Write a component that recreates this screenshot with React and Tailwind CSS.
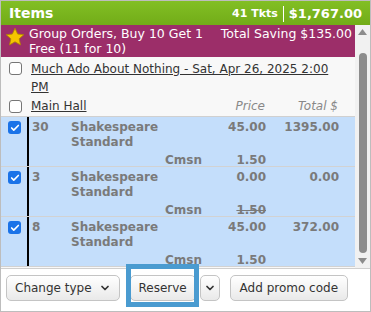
import { Check, ChevronDown } from 'lucide-react';

const rows = [
  { qty: '30', price: '45.00', total: '1395.00', cmsn: '1.50', struck: false },
  { qty: '3', price: '0.00', total: '0.00', cmsn: '1.50', struck: true },
  { qty: '8', price: '45.00', total: '372.00', cmsn: '1.50', struck: false },
];

const Box = ({ checked }) =>
  checked ? (
    <div className="w-[13px] h-[13px] rounded-[3px] bg-[#1a73e8] flex items-center justify-center">
      <Check className="w-[10px] h-[10px] text-white" strokeWidth={4} />
    </div>
  ) : (
    <div className="w-[13px] h-[13px] rounded-[3px] border border-[#767676] bg-white" />
  );

const Star = () => (
  <svg width="20" height="20" viewBox="0 0 24 24">
    <path
      d="M12 1.5l3.2 7 7.3.7-5.5 5 1.6 7.3L12 17.8 5.4 21.5 7 14.2l-5.5-5 7.3-.7z"
      fill="#f5c400"
      stroke="#b08600"
      strokeWidth="1"
    />
  </svg>
);

export default function App() {
  return (
    <div
      className="w-[371px] h-[312px] border border-[#bdbdbd] flex flex-col overflow-hidden bg-white text-[#333]"
      style={{ fontFamily: '"DejaVu Sans", Verdana, sans-serif' }}
    >
      {/* header */}
      <div className="h-[24px] shrink-0 bg-gradient-to-b from-[#82bf24] to-[#72ac18] flex items-center justify-between pl-[8px] pr-[8px] text-white font-bold">
        <span className="text-[14px]">Items</span>
        <div className="flex items-center pt-[2px]">
          <span className="text-[11px] pr-[5px] border-r border-white leading-[16px]">41 Tkts</span>
          <span className="text-[13px] pl-[5px]">$1,767.00</span>
        </div>
      </div>

      <div className="flex flex-1 min-h-0">
        <div className="flex-1 min-w-0 overflow-hidden bg-[#f8f8f8]">
          {/* promo banner */}
          <div className="bg-[#9c2e69] text-white text-[12.5px] leading-[15px] flex pl-[4px] pr-[3px] pt-[1px] h-[32px]">
            <div className="pt-[1px] pr-[4px]"><Star /></div>
            <div className="flex-1">Group Orders, Buy 10 Get 1 Free (11 for 10)</div>
            <div className="whitespace-nowrap">Total Saving $135.00</div>
          </div>

          <div className="flex items-start pl-[8px] pt-[3px] pr-[8px] text-[12px] leading-[18px]">
            <div className="pt-[2px] w-[22px] shrink-0"><Box /></div>
            <a className="underline">Much Ado About Nothing - Sat, Apr 26, 2025 2:00 PM</a>
          </div>

          <div className="flex items-center h-[21px] pl-[8px] text-[12px] border-b border-[#d0d0d0]">
            <div className="w-[22px] shrink-0"><Box /></div>
            <a className="underline flex-1">Main Hall</a>
            <span className="italic text-[#888] w-[60px] text-right">Price</span>
            <span className="italic text-[#888] w-[73px] text-right">Total $</span>
            <span className="w-[17px]" />
          </div>

          {rows.map((r, i) => (
            <div key={i} className="flex h-[50px] bg-[#c4defb] border-b border-[#d2d2d2] text-[12px] font-bold text-[#7a7a7a] leading-[15px]">
              <div className="w-[28px] shrink-0 pl-[7px] pt-[4px] border-r-2 border-black">
                <Box checked />
              </div>
              <div className="flex-1 pt-[3px]">
                <div className="flex">
                  <span className="w-[42px] pl-[3px]">{r.qty}</span>
                  <span className="w-[100px]">Shakespeare Standard</span>
                  <span className="w-[52px]" />
                  <span className="w-[43px] text-right">{r.price}</span>
                  <span className="w-[73px] text-right">{r.total}</span>
                </div>
                <div className="flex mt-[3px]">
                  <span className="w-[136px]" />
                  <span className="w-[58px]">Cmsn</span>
                  <span className={`w-[43px] text-right ${r.struck ? 'line-through' : ''}`}>{r.cmsn}</span>
                </div>
              </div>
            </div>
          ))}
        </div>

        {/* scrollbar */}
        <div className="w-[15px] shrink-0 bg-[#f1f1f1] flex flex-col items-center py-[4px]">
          <svg width="9" height="6" viewBox="0 0 9 6"><path d="M4.5 0L9 6H0z" fill="#8c8c8c" /></svg>
          <div className="w-[8px] flex-1 mt-[18px] mb-[5px] rounded-full bg-[#8c8c8c]" />
          <svg width="9" height="6" viewBox="0 0 9 6"><path d="M0 0h9L4.5 6z" fill="#8c8c8c" /></svg>
        </div>
      </div>

      {/* footer */}
      <div className="h-[43px] shrink-0 border-t border-[#cfcfcf] flex items-start pt-[6px] pl-[5px] gap-[10px] text-[12px] text-[#333]">
        <button className="h-[26px] px-[8px] rounded-[5px] border border-[#c4c4c4] bg-gradient-to-b from-white to-[#e9e9e9] flex items-center gap-[7px]">
          Change type <ChevronDown className="w-[12px] h-[12px]" strokeWidth={3.5} />
        </button>
        <div className="flex items-center">
          <div className="relative">
            <button className="h-[26px] w-[66px] rounded-[5px] border border-[#c4c4c4] bg-gradient-to-b from-white to-[#e9e9e9]">
              Reserve
            </button>
            <div className="absolute left-[-4px] right-[-3px] top-[-11px] bottom-[-6px] border-[5px] border-[#4a9bd0]" />
          </div>
          <button className="h-[26px] w-[20px] ml-[4px] rounded-[5px] border border-[#c4c4c4] bg-gradient-to-b from-white to-[#e9e9e9] flex items-center justify-center">
            <ChevronDown className="w-[12px] h-[12px]" strokeWidth={3.5} />
          </button>
        </div>
        <button className="h-[26px] px-[9px] rounded-[5px] border border-[#c4c4c4] bg-gradient-to-b from-white to-[#e9e9e9]">
          Add promo code
        </button>
      </div>
    </div>
  );
}
